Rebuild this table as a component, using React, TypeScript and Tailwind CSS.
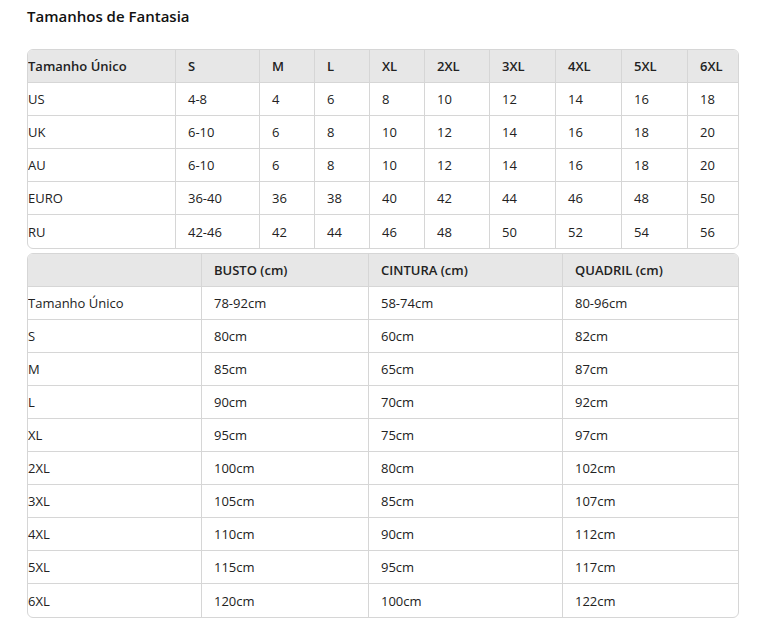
const sizes = ['S', 'M', 'L', 'XL', '2XL', '3XL', '4XL', '5XL', '6XL'];

const conversion = [
  ['US', '4-8', '4', '6', '8', '10', '12', '14', '16', '18'],
  ['UK', '6-10', '6', '8', '10', '12', '14', '16', '18', '20'],
  ['AU', '6-10', '6', '8', '10', '12', '14', '16', '18', '20'],
  ['EURO', '36-40', '36', '38', '40', '42', '44', '46', '48', '50'],
  ['RU', '42-46', '42', '44', '46', '48', '50', '52', '54', '56'],
];

const measures = [
  ['Tamanho Único', '78-92cm', '58-74cm', '80-96cm'],
  ['S', '80cm', '60cm', '82cm'],
  ['M', '85cm', '65cm', '87cm'],
  ['L', '90cm', '70cm', '92cm'],
  ['XL', '95cm', '75cm', '97cm'],
  ['2XL', '100cm', '80cm', '102cm'],
  ['3XL', '105cm', '85cm', '107cm'],
  ['4XL', '110cm', '90cm', '112cm'],
  ['5XL', '115cm', '95cm', '117cm'],
  ['6XL', '120cm', '100cm', '122cm'],
];

// célula da tabela
function Cell({ text, col, total, last, head }: { text: string; col: number; total: number; last: boolean; head?: boolean }) {
  return (
    <div
      className={`flex items-center h-[33px] pt-[2px] border-[#d6d6d6] ${last ? '' : 'border-b'} ${col < total - 1 ? 'border-r' : ''} ${col === 0 ? 'pl-0' : 'pl-3'} ${head ? 'bg-[#e7e7e7] font-semibold' : ''}`}
    >
      {text}
    </div>
  );
}

export default function App() {
  return (
    <div className="min-h-screen bg-white text-[#222] text-[13px] font-['Open_Sans','Noto_Sans',sans-serif]">
      <div className="pl-[27px] pt-[6px]">
        <h2 className="text-[15px] leading-[20px] font-semibold text-[#111]">Tamanhos de Fantasia</h2>

        <div className="mt-[23px] w-[712px] border border-[#d6d6d6] rounded-[6px] overflow-hidden">
          <div className="grid grid-cols-[148px_84px_55px_55px_55px_65px_66px_66px_66px_1fr]">
            {['Tamanho Único', ...sizes].map((t, i) => (
              <Cell key={'h' + i} text={t} col={i} total={10} last={false} head />
            ))}
            {conversion.map((row, r) =>
              row.map((t, i) => (
                <Cell key={r + '-' + i} text={t} col={i} total={10} last={r === conversion.length - 1} />
              ))
            )}
          </div>
        </div>

        <div className="mt-[4px] w-[712px] border border-[#d6d6d6] rounded-[6px] overflow-hidden">
          <div className="grid grid-cols-[174px_167px_194px_1fr]">
            {['', 'BUSTO (cm)', 'CINTURA (cm)', 'QUADRIL (cm)'].map((t, i) => (
              <Cell key={'m' + i} text={t} col={i} total={4} last={false} head />
            ))}
            {measures.map((row, r) =>
              row.map((t, i) => (
                <Cell key={r + '_' + i} text={t} col={i} total={4} last={r === measures.length - 1} />
              ))
            )}
          </div>
        </div>
      </div>
    </div>
  );
}
